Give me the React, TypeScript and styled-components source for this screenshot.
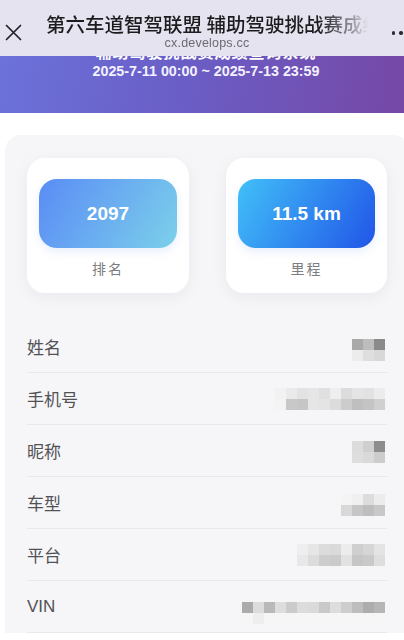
import React from "react";
import styled, { createGlobalStyle } from "styled-components";

const GlobalStyle = createGlobalStyle`
  html, body {
    margin: 0;
    padding: 0;
    background: #ffffff;
    overflow-x: hidden;
  }
  body {
    font-family: "Liberation Sans", "Noto Sans CJK SC", sans-serif;
    -webkit-font-smoothing: antialiased;
  }
`;

const Page = styled.div`
  display: flex;
  flex-direction: column;
  width: 404px;
  min-height: 640px;
  background: #fff;
`;

const TopBar = styled.header`
  position: sticky;
  top: 0;
  z-index: 2;
  height: 56px;
  display: flex;
  align-items: flex-start;
  background: #e4e3ef;
  padding-left: 5px;
  box-sizing: border-box;
`;

const CloseBtn = styled.div`
  width: 17px;
  height: 17px;
  margin-top: 24px;
  display: flex;
`;

const TitleCol = styled.div`
  width: 322px;
  margin-left: 24px;
  padding-top: 12px;
  display: flex;
  flex-direction: column;
  align-items: center;
`;

const Title = styled.div`
  width: 100%;
  height: 23px;
  font-family: "Noto Sans CJK SC", sans-serif;
  font-size: 19.5px;
  font-weight: 500;
  line-height: 23px;
  color: #1c1c1e;
  white-space: nowrap;
  overflow: hidden;
  -webkit-mask-image: linear-gradient(to right, #000 0%, #000 85%, rgba(0, 0, 0, 0.4) 95%, rgba(0, 0, 0, 0) 100%);
  mask-image: linear-gradient(to right, #000 0%, #000 85%, rgba(0, 0, 0, 0.4) 95%, rgba(0, 0, 0, 0) 100%);
`;

const Domain = styled.div`
  margin-top: 1px;
  font-size: 12.5px;
  line-height: 14px;
  color: #6a6a72;
  letter-spacing: 0.2px;
`;

const Dots = styled.div`
  display: flex;
  gap: 4px;
  margin-top: 31px;
  margin-left: auto;
  margin-right: -6px;
`;

const Dot = styled.span`
  width: 3.5px;
  height: 3.5px;
  border-radius: 50%;
  background: #2a2a2e;
`;

const Banner = styled.section`
  margin-top: -14px;
  height: 71px;
  padding-left: 8px;
  box-sizing: border-box;
  display: flex;
  flex-direction: column;
  align-items: center;
  background: linear-gradient(100deg, #6b72da 0%, #6a5ec6 45%, #7648a6 100%);
  color: #fff;
`;

const BannerTitle = styled.div`
  font-family: "Noto Sans CJK SC", sans-serif;
  font-size: 16px;
  font-weight: 700;
  line-height: 18px;
  letter-spacing: 1px;
`;

const BannerDate = styled.div`
  margin-top: 3px;
  font-size: 14.3px;
  font-weight: 700;
  line-height: 16px;
  color: #f3f1ff;
`;

const Panel = styled.main`
  margin: 22px -5px 0 5px;
  padding: 23px 22px 0;
  background: #f6f6f8;
  border-radius: 16px 16px 0 0;
  display: flex;
  flex-direction: column;
`;

const StatRow = styled.div`
  display: grid;
  grid-template-columns: 162px 161px;
  column-gap: 37px;
`;

const StatCard = styled.div`
  height: 135px;
  box-sizing: border-box;
  padding: 21px 12px 0;
  background: #fff;
  border-radius: 18px;
  box-shadow: 0 4px 16px rgba(40, 40, 80, 0.06);
  display: flex;
  flex-direction: column;
  align-items: center;
`;

const StatBox = styled.div<{ from: string; to: string }>`
  width: 100%;
  height: 69px;
  border-radius: 18px;
  background: linear-gradient(120deg, ${(p) => p.from} 0%, ${(p) => p.to} 100%);
  box-shadow: 0 4px 10px rgba(70, 120, 230, 0.12);
  display: flex;
  align-items: center;
  justify-content: center;
  color: #fff;
  font-size: 19px;
  font-weight: 700;
`;

const StatLabel = styled.div`
  margin-top: 10px;
  font-family: "Noto Sans CJK SC", sans-serif;
  font-size: 14px;
  line-height: 20px;
  letter-spacing: 2px;
  color: #7d7d80;
`;

const InfoList = styled.div`
  margin-top: 28px;
  display: flex;
  flex-direction: column;
`;

const InfoRow = styled.div`
  height: 51px;
  display: flex;
  align-items: center;
  justify-content: space-between;
  border-bottom: 1px solid #e9e9ec;
  padding-right: 2px;
`;

const InfoLabel = styled.span`
  font-size: 17px;
  color: #525256;
`;

const Mosaic = styled.div<{ cols: number; offset: number }>`
  display: grid;
  grid-template-columns: repeat(${(p) => p.cols}, 11px);
  grid-auto-rows: 11px;
  margin-top: ${(p) => p.offset}px;
  filter: blur(0.4px);
`;

const Cell = styled.span<{ shade: string }>`
  background: ${(p) => p.shade};
`;

type Info = { label: string; cells: string[][]; offset: number };

const rows: Info[] = [
  {
    label: "姓名",
    offset: 6,
    cells: [
      ["#a9a9a9", "#bdbdbd", "#8a8a8a"],
      ["#ececec", "#dedede", "#d8d8d8"],
    ],
  },
  {
    label: "手机号",
    offset: 0,
    cells: [
      ["#f2f2f2", "#eaeaea", "#e2e2e2", "#e6e6e6", "#e0e0e0", "#eeeeee", "#dcdcdc", "#e4e4e4", "#e2e2e2", "#ececec"],
      ["#f4f4f4", "#c8c8c8", "#c6c6c6", "#e6e6e6", "#e4e4e4", "#dcdcdc", "#cccccc", "#bfbfbf", "#c4c4c4", "#d0d0d0"],
    ],
  },
  {
    label: "昵称",
    offset: 2,
    cells: [
      ["#dcdcdc", "#cfcfcf", "#8d8d8d"],
      ["#dedede", "#d9d9d9", "#cccccc"],
    ],
  },
  {
    label: "车型",
    offset: 4,
    cells: [
      ["#f4f4f4", "#f0f0f0", "#dcdcdc", "#ececec"],
      ["#d8d8d8", "#c6c6c6", "#bebebe", "#c8c8c8"],
    ],
  },
  {
    label: "平台",
    offset: 0,
    cells: [
      ["#eeeeee", "#e6e6e6", "#dcdcdc", "#dadada", "#ececec", "#cfcfcf", "#d6d6d6", "#e4e4e4"],
      ["#e8e8e8", "#dcdcdc", "#cdcdcd", "#cbcbcb", "#e2e2e2", "#c6c6c6", "#c9c9c9", "#dedede"],
    ],
  },
  {
    label: "VIN",
    offset: 12,
    cells: [
      ["#ababab", "#dcdcdc", "#b9b9b9", "#dddddd", "#cbcbcb", "#dcdcdc", "#dadada", "#c9c9c9", "#dddddd", "#cdcdcd", "#bdbdbd", "#adadad", "#b6b6b6"],
      ["#f6f6f6", "#eeeeee", "#f6f6f6", "#f6f6f6", "#f6f6f6", "#f6f6f6", "#f6f6f6", "#f6f6f6", "#f6f6f6", "#f6f6f6", "#f6f6f6", "#f6f6f6", "#f6f6f6"],
    ],
  },
];

const CloseIcon = () => (
  <svg width="17" height="17" viewBox="0 0 17 17">
    <path d="M1.5 1.5 L15.5 15.5 M15.5 1.5 L1.5 15.5" stroke="#222226" strokeWidth="1.7" strokeLinecap="round" />
  </svg>
);

export default function App() {
  return (
    <Page>
      <GlobalStyle />
      <TopBar>
        <CloseBtn>
          <CloseIcon />
        </CloseBtn>
        <TitleCol>
          <Title>第六车道智驾联盟 辅助驾驶挑战赛成绩查询</Title>
          <Domain>cx.develops.cc</Domain>
        </TitleCol>
        <Dots>
          <Dot />
          <Dot />
          <Dot />
        </Dots>
      </TopBar>

      <Banner>
        <BannerTitle>辅助驾驶挑战赛成绩查询系统</BannerTitle>
        <BannerDate>2025-7-11 00:00 ~ 2025-7-13 23:59</BannerDate>
      </Banner>

      <Panel>
        <StatRow>
          <StatCard>
            <StatBox from="#5a8cf6" to="#7bd0ea">2097</StatBox>
            <StatLabel>排名</StatLabel>
          </StatCard>
          <StatCard>
            <StatBox from="#41c0f8" to="#2155e8">11.5 km</StatBox>
            <StatLabel>里程</StatLabel>
          </StatCard>
        </StatRow>

        <InfoList>
          {rows.map((r) => (
            <InfoRow key={r.label}>
              <InfoLabel>{r.label}</InfoLabel>
              <Mosaic cols={r.cells[0].length} offset={r.offset}>
                {r.cells.flat().map((c, i) => (
                  <Cell key={i} shade={c} />
                ))}
              </Mosaic>
            </InfoRow>
          ))}
        </InfoList>
      </Panel>
    </Page>
  );
}
